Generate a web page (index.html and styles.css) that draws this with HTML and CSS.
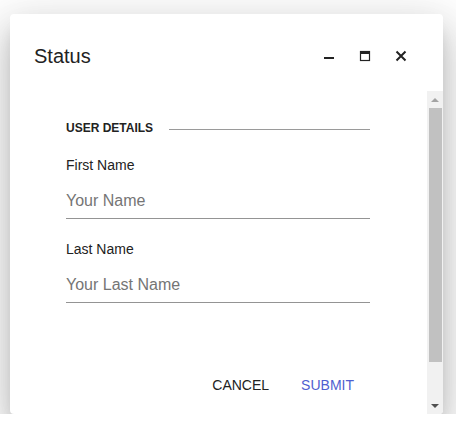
FILE: index.html
```html
<!DOCTYPE html>
<html lang="en">
<head>
<meta charset="utf-8">
<title>Status</title>
<link rel="stylesheet" href="styles.css">
</head>
<body>
  <div class="dialog">
    <header class="dialog-header">
      <h1 class="dialog-title">Status</h1>
      <div class="window-controls">
        <button class="ctrl" aria-label="Minimize">
          <svg width="24" height="24" viewBox="0 0 24 24"><rect x="7" y="13" width="10" height="2" fill="#222"/></svg>
        </button>
        <button class="ctrl" aria-label="Maximize">
          <svg width="24" height="24" viewBox="0 0 24 24"><rect x="7.5" y="7.5" width="9" height="9" fill="none" stroke="#222" stroke-width="1.2"/><rect x="7" y="7" width="10" height="3" fill="#222"/></svg>
        </button>
        <button class="ctrl" aria-label="Close">
          <svg width="24" height="24" viewBox="0 0 24 24"><path d="M7.5 7.5 L16.5 16.5 M16.5 7.5 L7.5 16.5" stroke="#222" stroke-width="2" fill="none"/></svg>
        </button>
      </div>
    </header>
    <div class="dialog-body">
      <div class="dialog-content">
        <form class="form">
          <div class="legend">
            <span class="legend-text">USER DETAILS</span>
            <span class="legend-rule"></span>
          </div>
          <label class="field">
            <span class="field-label">First Name</span>
            <span class="field-input">Your Name</span>
          </label>
          <label class="field">
            <span class="field-label">Last Name</span>
            <span class="field-input">Your Last Name</span>
          </label>
          <div class="actions">
            <button type="button" class="btn">CANCEL</button>
            <button type="button" class="btn btn-primary">SUBMIT</button>
          </div>
        </form>
      </div>
      <div class="scrollbar">
        <div class="scroll-btn"><span class="arrow-up"></span></div>
        <div class="scroll-track"><div class="scroll-thumb"></div></div>
        <div class="scroll-btn"><span class="arrow-down"></span></div>
      </div>
    </div>
  </div>
</body>
</html>
```

FILE: styles.css
```css
html, body {
  margin: 0;
  background: #fff;
}

body {
  padding: 14px 0 0 10px;
  font-family: "Liberation Sans", Arial, sans-serif;
  color: #222;
}

.dialog {
  width: 433px;
  height: 400px;
  background: #fff;
  border-radius: 4px;
  overflow: hidden;
  display: flex;
  flex-direction: column;
  box-shadow: 0 11px 15px -7px rgba(0, 0, 0, 0.2),
              0 24px 38px 3px rgba(0, 0, 0, 0.14),
              0 9px 46px 8px rgba(0, 0, 0, 0.12);
}

.dialog-header {
  height: 77px;
  box-sizing: border-box;
  padding: 30px 30px 0 24px;
  display: flex;
  align-items: flex-start;
  justify-content: space-between;
}

.dialog-title {
  margin: 0;
  font-size: 20px;
  line-height: 24px;
  font-weight: normal;
  color: #222;
}

.window-controls {
  display: flex;
  gap: 12px;
}

.ctrl {
  width: 24px;
  height: 24px;
  padding: 0;
  border: 0;
  background: none;
  display: block;
}

.ctrl svg {
  display: block;
}

.dialog-body {
  flex: 1;
  display: flex;
  min-height: 0;
}

.dialog-content {
  flex: 1;
  padding: 30px 0 0 56px;
}

.form {
  width: 304px;
  display: flex;
  flex-direction: column;
}

.legend {
  display: flex;
  align-items: center;
  gap: 16px;
  height: 14px;
  margin-bottom: 22px;
}

.legend-text {
  font-size: 12px;
  line-height: 14px;
  font-weight: bold;
  color: #222;
}

.legend-rule {
  flex: 1;
  height: 1px;
  background: #9a9a9a;
  margin-top: 2px;
}

.field {
  display: flex;
  flex-direction: column;
  margin-bottom: 22px;
}

.field-label {
  font-size: 14px;
  line-height: 16px;
  color: #222;
  margin-bottom: 17px;
}

.field-input {
  font-size: 16px;
  line-height: 20px;
  color: #757575;
  padding: 1px 0 7px;
  border-bottom: 1px solid #949494;
}

.actions {
  display: flex;
  justify-content: flex-end;
  margin-top: 42px;
}

.btn {
  font-family: "Liberation Sans", Arial, sans-serif;
  font-size: 14px;
  line-height: 36px;
  height: 36px;
  padding: 0 16px;
  min-width: 64px;
  border: 0;
  background: none;
  color: #222;
}

.btn-primary {
  color: #5060d0;
}

.scrollbar {
  width: 16px;
  background: #f1f1f1;
  display: flex;
  flex-direction: column;
}

.scroll-btn {
  height: 17px;
  display: flex;
  align-items: center;
  justify-content: center;
}

.scroll-track {
  flex: 1;
  padding: 0 1px 0 2px;
}

.scroll-thumb {
  height: 254px;
  background: #c1c1c1;
}

.arrow-up {
  width: 0;
  height: 0;
  border-left: 4px solid transparent;
  border-right: 4px solid transparent;
  border-bottom: 4px solid #a3a3a3;
}

.arrow-down {
  width: 0;
  height: 0;
  border-left: 4px solid transparent;
  border-right: 4px solid transparent;
  border-top: 4px solid #505050;
}
```
